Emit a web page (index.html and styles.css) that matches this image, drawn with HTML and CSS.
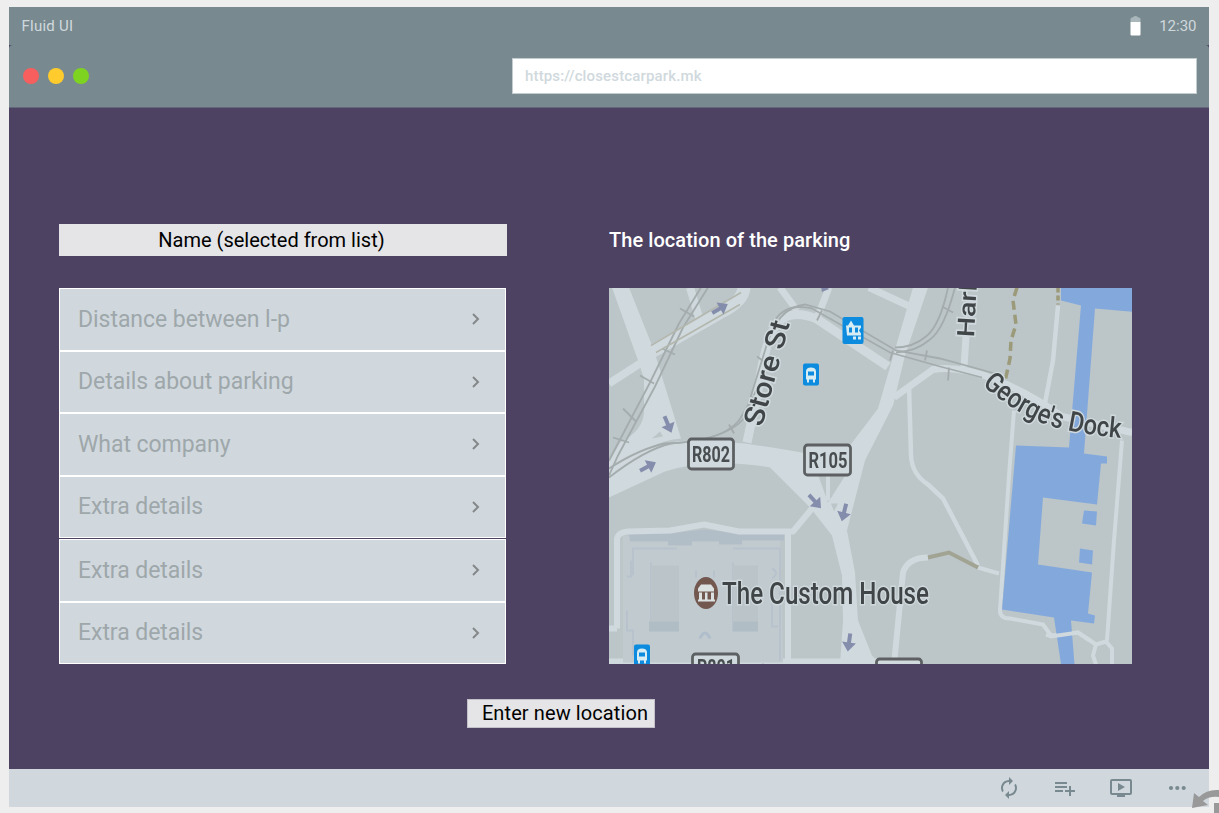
FILE: index.html
```html
<!DOCTYPE html>
<html lang="en">
<head>
<meta charset="utf-8">
<title>Closest car park</title>
<link rel="stylesheet" href="styles.css">
</head>
<body>
<div class="screen">
  <header class="chrome">
    <div class="status">
      <span class="brand">Fluid UI</span>
      <span class="status-right">
        <svg class="battery" width="11" height="20" viewBox="0 0 11 20"><path d="M3 1.5Q3 0 5.500 0T8 1.500H9Q10.500 1.500 10.500 3V6H.5V3Q.5 1.500 2 1.500Z" fill="#a9b6ba"/><path d="M.5 6h10v12.500q0 1-1 1h-8q-1 0-1-1z" fill="#fff"/></svg>
        <span>12:30</span>
      </span>
    </div>
    <div class="toolbar">
      <div class="dots"><i class="dot red"></i><i class="dot yellow"></i><i class="dot green"></i></div>
      <div class="url">https://closestcarpark.mk</div>
    </div>
    <svg class="notch left" width="4" height="4"><path d="M0 0h4Q0 0 0 4z" fill="#4d4262"/></svg>
    <svg class="notch right" width="4" height="4"><path d="M4 0H0Q4 0 4 4z" fill="#4d4262"/></svg>
  </header>
  <main class="content">
    <div class="columns">
      <section class="details">
        <div class="name">Name (selected from list)</div>
        <div class="group first">
          <div class="row"><span>Distance between l-p</span><svg width="10" height="14" viewBox="0 0 10 14"><path d="M2 2l5 5-5 5"/></svg></div>
          <div class="row"><span class="clip">Details about parking</span><svg width="10" height="14" viewBox="0 0 10 14"><path d="M2 2l5 5-5 5"/></svg></div>
          <div class="row"><span>What company</span><svg width="10" height="14" viewBox="0 0 10 14"><path d="M2 2l5 5-5 5"/></svg></div>
          <div class="row"><span>Extra details</span><svg width="10" height="14" viewBox="0 0 10 14"><path d="M2 2l5 5-5 5"/></svg></div>
        </div>
        <div class="group second">
          <div class="row"><span>Extra details</span><svg width="10" height="14" viewBox="0 0 10 14"><path d="M2 2l5 5-5 5"/></svg></div>
          <div class="row"><span>Extra details</span><svg width="10" height="14" viewBox="0 0 10 14"><path d="M2 2l5 5-5 5"/></svg></div>
        </div>
      </section>
      <section class="location">
        <h1>The location of the parking</h1>
        <svg class="map" viewBox="609 287.500 523 376">
          <defs>
            <filter id="soft" x="-5%" y="-5%" width="110%" height="110%"><feGaussianBlur stdDeviation=".7"/></filter>
            <path id="dock" d="M982 384Q1013 412 1048 425Q1084 435 1130 438"/>
            <path id="direction" d="M-9-2H0V-7L9 0 0 7V2H-9Z" fill="#858dad"/>
            <g id="bus"><rect x="-8" y="-11" width="16" height="22" rx="2" fill="#078bdf"/><path d="M-5-3q0-4 5-4t5 4V5H4V8H2V5H-2V8H-4V5H-5z" fill="#d8ecf4"/><path d="M-3-3H3V1H-3z" fill="#078bdf"/></g>
          </defs>
          <g filter="url(#soft)">
          <rect x="600" y="280" width="540" height="390" fill="#bcc5c8"/>
          <g fill="#d0d9dd">
            <path d="M612 287H629L654 350L681 438Q650 440 609 474V462L620 442Q644 430 644 410V378L638 360Z"/>
            <path d="M609 468Q650 438 700 440L745 443Q780 448 807 453L850 445L878 408 913 287H928L905 355 893 405 865 460 847 530 855 572 858 620 872 655 880 664H840L843 620 842 575 832 535 810 507 770 467Q710 457 665 471L609 497Z"/>
            <path d="M609 658H885V664H609Z"/>
          </g>
          <path d="M663 436L660 431 652 438Z" fill="#bcc5c8"/>
          <path d="M818 474L828 502 846 474Z" fill="#bcc5c8"/>
          <path d="M828 475v25" stroke="#d0d9dd" stroke-width="4"/>
          <path d="M831 503h7l-4 8z" fill="#bcc5c8"/>
          <path d="M630 535L780 533 783 662H623V535Z" fill="#c0cacf"/>
          <path d="M629 533H671L705 529 740 533H784V540H742V544H719V541H692V545H668V541H630Z" fill="#b2bec7"/>
          <g fill="none" stroke="#b7c2cd" stroke-width="2">
            <path d="M677 548H633V575M733 548H780V660M631 560V576H627M627 610V630H633V655M651 562V630H678M733 562V630H758M772 600V626H778M772 568q8 4 0 10M696 570V577M714 570V577"/>
          </g>
          <path d="M651 565h28v65h-28zm82 0h25v65h-25z" fill="#bbc5c9"/>
          <path d="M649 621H679V631H649zM733 621H758V631H733z" fill="#b1bdc5"/>
          <path d="M700 638q5-11 10 0" fill="none" stroke="#b0bdcb" stroke-width="3"/>
          <g fill="none" stroke="#d0d9dd" stroke-linejoin="round">
            <path d="M609 383L640 363M690 287l9 30" stroke-width="8"/>
            <path d="M652 351L720 312Q743 301 744 287" stroke-width="13"/>
            <path d="M780 287L797 310M829 287L818 315" stroke-width="7"/>
            <path d="M747 442L758 390Q765 340 777 323Q790 308 816 318L888 366" stroke-width="9"/>
            <path d="M869 287L910 306M966 336L964 367" stroke-width="7"/>
            <path d="M894 397L933 369Q960 365 995 379T1062 416L1132 432" stroke-width="7"/>
            <path d="M909 385L911 455Q912 474 928 484L943 498 978 565M1044 408L1053 360 1058 305" stroke-width="4.500"/>
            <path d="M1014 410L1009 475 1000 610Q1000 618 1010 618L1043 624 1051 635 1078 632 1096 644 1106 641 1112 648V664M1096 644L1093 655 1096 664M1122 440L1114 540 1107 640M999 573L978 567" stroke-width="4"/>
            <path d="M894 664L903 572Q908 557 928 557" stroke-width="6"/>
            <path d="M617 628V538Q618 532 628 531L670 530 704 524 739 531H793L812 508M788 533V660M609 628H617" stroke-width="6"/>
          </g>
          <path d="M928 557L949 552 978 567" fill="none" stroke="#a2a493" stroke-width="4"/>
          <g fill="none" stroke="#a4acad" stroke-width="1.800">
            <path d="M701 287L679 323 650 382 609 460M708 287L683 327 655 386 618 455 609 475"/>
            <path d="M609 468Q640 448 665 443Q720 442 739 420L748 405 765 350Q776 307 805 304L830 311 896 350 940 358 995 373"/>
            <path d="M609 477Q645 449 671 443Q725 439 743 419L756 390M775 320Q786 302 812 308L890 352 940 366 982 377"/>
            <path d="M948 287Q940 325 926 336Q913 347 895 347M955 287Q944 329 930 339Q916 351 896 352"/>
            <path d="M680 308l14 8M662 348l13 6M640 375l14 8M623 408l13 13M613 437l16 5M729 424l5 9M757 356l8 6M817 320l5-10M890 360l3-10M925 360l2-10M948 380l1-13M942 306l11 6"/>
          </g>
          <path d="M651 345L741 292M656 352L740 304" fill="none" stroke="#b3b7ad" stroke-width="1.500"/>
          <path d="M1017 287L1013 300 1016 324 1011 340 1010 358 1005 381" fill="none" stroke="#9b9a79" stroke-width="3.500" stroke-dasharray="9 5"/>
          <path d="M1058 287V304" stroke="#9b9a79" stroke-width="3.500" stroke-dasharray="5 3"/>
          <g fill="#83a9dc">
            <path d="M1061 280H1140V312L1095 308 1084 453 1107 456V463H1101L1097 504 1043 497 1038 564 1092 572 1088 613 1095 615 1094 623 1071 620 1075 670H1062L1054 617 1002 609 1016 445 1069 447 1081 305 1061 300Z"/>
            <path d="M1084 510L1097 511 1096 525 1082 523ZM1080 548L1093 550 1092 564 1079 562Z"/>
          </g>
          <path d="M1046 634L1051 636 1078 632 1090 640" fill="none" stroke="#d0d9dd" stroke-width="4"/>
          <path d="M1122 430L1132 432" fill="none" stroke="#d0d9dd" stroke-width="6"/>
          <use href="#direction" transform="translate(720 308) rotate(-30)"/>
          <use href="#direction" transform="translate(668 424) rotate(67)"/>
          <use href="#direction" transform="translate(648 466) rotate(-28)"/>
          <use href="#direction" transform="translate(815 501) rotate(48)"/>
          <use href="#direction" transform="translate(844 512) rotate(104)"/>
          <use href="#direction" transform="translate(849 642) rotate(98)"/>
          <use href="#direction" transform="translate(825 286) rotate(120) scale(.7)"/>
          <use href="#direction" transform="translate(763 669) rotate(-90) scale(.7)"/>
          <g><rect x="842.500" y="316.500" width="21" height="27" rx="2" fill="#078bdf"/><path d="M846 325h2l3-5 3 5h7v2l-2 3 2 3v2H847zM853 336h3v3h-3zm5 0h3v3h-3z" fill="#d8ecf4"/><path d="M849 327h3v5h-3zm6 0h3v5h-3z" fill="#078bdf"/></g>
          <use href="#bus" x="811" y="374"/>
          <use href="#bus" x="642" y="655"/>
          <g class="shield">
            <rect x="688.500" y="438.500" width="45" height="30" rx="3"/><text x="711" y="461" textLength="38" lengthAdjust="spacingAndGlyphs">R802</text>
            <rect x="804.500" y="444.500" width="46" height="30" rx="3"/><text x="828" y="467" textLength="39" lengthAdjust="spacingAndGlyphs">R105</text>
            <rect x="692.500" y="653.500" width="46" height="30" rx="3"/><text x="716" y="674" textLength="38" lengthAdjust="spacingAndGlyphs">R801</text>
            <rect x="876.500" y="658.500" width="45" height="30" rx="3"/>
          </g>
          <ellipse cx="706" cy="592.500" rx="12" ry="16" fill="#735950"/>
          <path d="M698 588l3-4h10l3 4v3h-16zm1 4h3v7h-3zm6 0h2.500v7h-2.500zm6 0h3v7h-3zm-13 7h17v2h-17z" fill="#dce1e1"/>
          <text class="label" x="722" y="603" font-size="31" textLength="207" lengthAdjust="spacingAndGlyphs">The Custom House</text>
          <text class="label" transform="translate(762 427) rotate(-75)" font-size="28" textLength="108" lengthAdjust="spacingAndGlyphs">Store St</text>
          <text class="label" transform="translate(974 337) rotate(-87)" font-size="24" textLength="53" lengthAdjust="spacingAndGlyphs">Harl</text>
          <text class="label" font-size="28"><textPath href="#dock" textLength="152" lengthAdjust="spacingAndGlyphs">George's Dock</textPath></text>
          </g>
        </svg>
      </section>
    </div>
    <button class="enter">Enter new location</button>
  </main>
  <footer class="bottom">
    <svg width="24" height="24" viewBox="0 0 24 24"><path d="M12 6v3l4-4-4-4v3c-4.420 0-8 3.580-8 8 0 1.570.46 3.030 1.240 4.260L6.700 14.800A5.870 5.870 0 0 1 6 12c0-3.310 2.690-6 6-6zm6.760 1.740L17.300 9.200c.44.840.7 1.790.7 2.800 0 3.310-2.690 6-6 6v-3l-4 4 4 4v-3c4.420 0 8-3.580 8-8 0-1.570-.46-3.030-1.240-4.260z"/></svg>
    <svg width="24" height="24" viewBox="0 0 24 24"><path d="M14 10H2v2h12zm0-4H2v2h12zm4 8v-4h-2v4h-4v2h4v4h2v-4h4v-2zM2 16h8v-2H2z"/></svg>
    <svg width="24" height="24" viewBox="0 0 24 24"><path d="M21 3H3a2 2 0 0 0-2 2v12a2 2 0 0 0 2 2h5v2h8v-2h5a2 2 0 0 0 2-2V5a2 2 0 0 0-2-2zm0 14H3V5h18zM9 7v8l7-4z"/></svg>
    <svg width="24" height="24" viewBox="0 0 24 24"><circle cx="6" cy="12" r="2.100"/><circle cx="12.300" cy="12" r="2.100"/><circle cx="18.700" cy="12" r="2.100"/></svg>
  </footer>
</div>
<svg class="undo" width="29" height="25" viewBox="1190 788 29 25"><path d="M1192 808L1194 793 1199 797Q1207 789 1219 790V797Q1209 796 1203 801L1208 805Z" fill="#999"/><path d="M1214 803h5v10h-5z" fill="#999"/></svg>
</body>
</html>
```
FILE: styles.css
```css
* { box-sizing: border-box; }
body {
  margin: 0;
  height: 813px;
  padding: 7px 10px 6px 9px;
  overflow: hidden;
  background: #eee;
  font-family: Roboto, "Liberation Sans", sans-serif;
}
.screen {
  width: 1200px;
  height: 800px;
  display: flex;
  flex-direction: column;
  background: #4d4262;
}
.chrome {
  position: relative;
  height: 101px;
  background: #788a8f;
  border-bottom: 1px solid #62677d;
}
.status {
  height: 38px;
  padding: 0 12.500px;
  display: flex;
  justify-content: space-between;
  align-items: center;
  font-size: 15px;
  color: #d0d8de;
}
.brand { letter-spacing: .25px; }
.status-right { display: flex; align-items: center; gap: 18.500px; }
.toolbar {
  height: 62px;
  padding: 0 12px 0 14px;
  display: flex;
  justify-content: space-between;
  align-items: center;
}
.dots { display: flex; gap: 9px; }
.dot { width: 16px; height: 16px; border-radius: 50%; }
.red { background: #f75f5f; }
.yellow { background: #ffcb2d; }
.green { background: #7ed321; }
.url {
  width: 685px;
  height: 36px;
  padding-left: 12px;
  background: #fff;
  border: 1px solid #c3cccf;
  color: #d0d9dd;
  font-size: 15px;
  font-weight: 500;
  letter-spacing: .15px;
  line-height: 34px;
}
.notch { position: absolute; top: 38px; }
.left { left: 0; }
.right { right: 0; }
.content { flex: 1; padding: 116px 77px 0 50px; }
.columns { display: flex; justify-content: space-between; }
.details { width: 448px; }
.name {
  height: 32px;
  margin-bottom: 32px;
  padding-right: 23px;
  background: #e5e5e7;
  color: #000;
  font-size: 20px;
  line-height: 32px;
  text-align: center;
}
.group {
  width: 447px;
  display: grid;
  gap: 2px;
  padding: 1px;
  background: #fff;
}
.first { height: 250px; grid-template-rows: 60.500px 60.500px 60.500px 60.500px; }
.second { height: 125px; margin-top: 1px; grid-template-rows: 60.500px 60.500px; }
.row {
  display: flex;
  align-items: center;
  justify-content: space-between;
  padding: 0 24px 0 18px;
  background: #d0d8de;
  color: #9ea7aa;
  font-size: 23px;
  letter-spacing: -.05px;
}
.row span { height: 29px; line-height: 30px; }
.row svg { fill: none; stroke: #858889; stroke-width: 2; }
.row .clip { height: 27px; margin-bottom: 2px; overflow: hidden; }
.location { width: 523px; }
h1 {
  height: 32px;
  margin: 0 0 31.500px;
  color: #fff;
  font-size: 20px;
  font-weight: 500;
  letter-spacing: .06px;
  line-height: 32px;
}
.map { display: block; width: 523px; height: 376px; }
.shield rect { fill: #d0d9dd; stroke: #5c6162; stroke-width: 2.800; }
.shield text { fill: #484e50; font-size: 22px; font-weight: 700; text-anchor: middle; }
.label {
  fill: #404547;
  font-weight: 500;
  stroke: #d0d9dd;
  stroke-width: 3px;
  paint-order: stroke;
}
.enter {
  display: block;
  width: 188px;
  height: 29px;
  margin: 35px 0 0 408px;
  padding: 0 0 0 8px;
  border: 1px solid #c4c0ca;
  background: #e5e5e7;
  color: #000;
  font: 20px/27px Roboto, sans-serif;
  letter-spacing: .1px;
  white-space: nowrap;
}
.bottom {
  height: 38px;
  padding-right: 20px;
  display: flex;
  align-items: center;
  justify-content: flex-end;
  gap: 32px;
  background: #d0d8de;
}
.bottom svg { fill: #788a8f; }
.undo { position: absolute; left: 1190px; top: 788px; }
```
